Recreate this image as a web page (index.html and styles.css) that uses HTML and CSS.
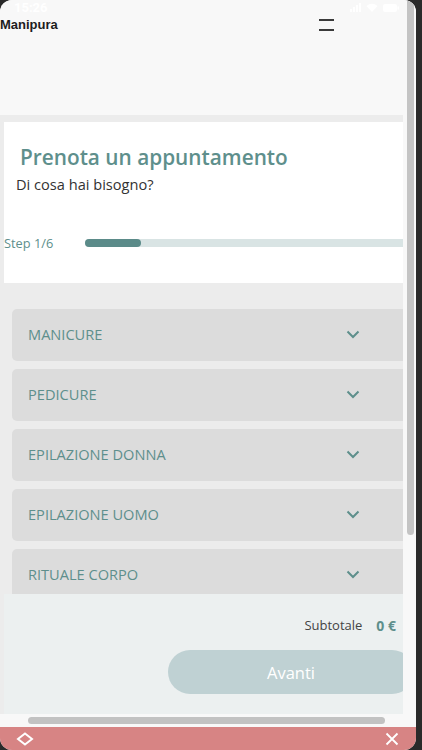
FILE: index.html
```html
<!DOCTYPE html>
<html lang="it">
<head>
  <meta charset="UTF-8">
  <meta name="viewport" content="width=device-width, initial-scale=1.0">
  <title>Manipura - Prenota un appuntamento</title>
  <link rel="stylesheet" href="styles.css">
</head>
<body>
  <div class="device">
    <div class="screen">
      <div class="viewport">
        <div class="page">
          <div class="statusbar">
            <span class="time">15:26</span>
            <span class="status-icons">
              <svg width="11" height="9" viewBox="0 0 11 9"><rect x="0" y="6" width="2" height="3" fill="#fff"/><rect x="3" y="4" width="2" height="5" fill="#fff"/><rect x="6" y="2" width="2" height="7" fill="#fff"/><rect x="9" y="0" width="2" height="9" fill="#fff"/></svg>
              <svg width="12" height="9" viewBox="0 0 12 9"><path d="M6 9 0.5 3a8 8 0 0 1 11 0z" fill="#fff"/></svg>
              <svg width="16" height="8" viewBox="0 0 16 8"><rect x="0" y="0" width="14" height="8" rx="2" fill="#fff"/><rect x="14.5" y="2.5" width="1.5" height="3" fill="#fff"/></svg>
            </span>
          </div>

          <header class="topbar">
            <span class="brand">Manipura</span>
            <button class="menu" aria-label="Menu"><span></span><span></span></button>
          </header>

          <main class="booking">
            <section class="intro">
              <h1>Prenota un appuntamento</h1>
              <p class="question">Di cosa hai bisogno?</p>
              <div class="step">
                <span class="step-label">Step 1/6</span>
                <div class="progress"><div class="progress-fill" style="width: 56px"></div></div>
              </div>
            </section>

            <div class="services">
              <div class="service"><span>Manicure</span><svg class="chevron" width="14" height="9" viewBox="0 0 14 9"><path d="M1.5 1.5 7 7l5.5-5.5"/></svg></div>
              <div class="service"><span>Pedicure</span><svg class="chevron" width="14" height="9" viewBox="0 0 14 9"><path d="M1.5 1.5 7 7l5.5-5.5"/></svg></div>
              <div class="service"><span>Epilazione donna</span><svg class="chevron" width="14" height="9" viewBox="0 0 14 9"><path d="M1.5 1.5 7 7l5.5-5.5"/></svg></div>
              <div class="service"><span>Epilazione uomo</span><svg class="chevron" width="14" height="9" viewBox="0 0 14 9"><path d="M1.5 1.5 7 7l5.5-5.5"/></svg></div>
              <div class="service"><span>Rituale corpo</span><svg class="chevron" width="14" height="9" viewBox="0 0 14 9"><path d="M1.5 1.5 7 7l5.5-5.5"/></svg></div>
            </div>

            <footer class="summary">
              <div class="subtotal">
                <span class="subtotal-label">Subtotale</span>
                <strong class="subtotal-value">0 €</strong>
              </div>
              <button class="next" disabled>Avanti</button>
            </footer>
          </main>
        </div>
        <div class="vscroll"><span class="vthumb"></span></div>
      </div>

      <div class="hscroll"><span class="hthumb"></span></div>

      <nav class="toolbar">
        <svg width="18" height="14" viewBox="0 0 18 14"><path d="M9 1.5 16 7l-7 5.5L2 7z" fill="none" stroke="#fff" stroke-width="2" stroke-linejoin="miter"/></svg>
        <svg width="14" height="14" viewBox="0 0 14 14"><path d="M1.5 1.5l11 11M12.5 1.5l-11 11" stroke="#fff" stroke-width="1.8"/></svg>
      </nav>
    </div>
  </div>
</body>
</html>
```

FILE: styles.css
```css
* {
  box-sizing: border-box;
}

body {
  margin: 0;
  padding: 0;
  width: 422px;
  height: 750px;
  overflow: hidden;
  background: #2a2a2a;
  font-family: "Open Sans", Arial, sans-serif;
}

.device {
  width: 422px;
  height: 750px;
  background: #2a2a2a;
}

.screen {
  width: 416px;
  height: 750px;
  background: #f8f8f8;
  border-radius: 12px;
  overflow: hidden;
  display: flex;
  flex-direction: column;
}

.viewport {
  height: 714px;
  display: flex;
}

.page {
  width: 407px;
  padding-right: 4px;
  background: #f8f8f8;
}

.vscroll {
  width: 9px;
  padding-right: 2px;
  background: #f8f8f8;
}

.vthumb {
  display: block;
  width: 7px;
  height: 535px;
  background: #c4c4c4;
  border-radius: 0 0 4px 4px;
}

/* status bar + header */
.statusbar {
  height: 15px;
  display: flex;
  align-items: center;
  justify-content: space-between;
  padding: 0 4px 0 14px;
}

.time {
  color: #fff;
  font-family: Roboto, Arial, sans-serif;
  font-weight: 700;
  font-size: 13px;
}

.status-icons {
  display: flex;
  align-items: center;
  gap: 5px;
}

.topbar {
  height: 100px;
  display: flex;
  justify-content: space-between;
  align-items: flex-start;
  padding-right: 69px;
}

.brand {
  font-family: "Liberation Sans", Arial, sans-serif;
  font-weight: 700;
  font-size: 13px;
  line-height: 20px;
  color: #1d1d1d;
}

.menu {
  display: flex;
  flex-direction: column;
  gap: 7.5px;
  width: 15px;
  padding: 0;
  margin-top: 4px;
  border: none;
  background: none;
}

.menu span {
  display: block;
  width: 15px;
  height: 2px;
  background: #3a3a3a;
}

/* booking */
.booking {
  width: 403px;
  height: 599px;
  overflow: hidden;
  background: #ececec;
  padding: 7px 0 0 4px;
}

.intro {
  height: 161px;
  background: #fff;
  padding-top: 21px;
}

.intro h1 {
  margin: 0;
  padding-left: 16px;
  font-size: 20.8px;
  font-weight: 600;
  line-height: 28px;
  color: #5e8f8c;
}

.question {
  margin: 3px 0 0;
  padding-left: 12px;
  font-size: 14.6px;
  line-height: 20px;
  color: #333;
}

.step {
  display: flex;
  align-items: center;
  margin-top: 40px;
  height: 18px;
}

.step-label {
  width: 81px;
  font-size: 12.8px;
  color: #5e8f8c;
}

.progress {
  flex: 1;
  height: 8.5px;
  background: #d9e4e4;
  border-radius: 5px 0 0 5px;
}

.progress-fill {
  height: 100%;
  background: #5b8b89;
  border-radius: 5px;
}

.services {
  height: 311px;
  overflow: hidden;
  padding: 26px 0 0 8px;
  display: flex;
  flex-direction: column;
  gap: 8px;
}

.service {
  flex: none;
  width: 400px;
  height: 52px;
  display: flex;
  align-items: center;
  justify-content: space-between;
  padding: 0 52px 2px 16px;
  background: #dcdcdc;
  border-radius: 5px;
  font-size: 14.6px;
  text-transform: uppercase;
  color: #5e8f8c;
}

.chevron path {
  fill: none;
  stroke: #5e8f8c;
  stroke-width: 2;
}

.summary {
  height: 120px;
  background: #ecf0f0;
  padding-top: 21px;
}

.subtotal {
  display: flex;
  justify-content: flex-end;
  align-items: center;
  gap: 14px;
  padding-right: 7px;
  height: 20px;
}

.subtotal-label {
  font-size: 13px;
  color: #444;
}

.subtotal-value {
  font-size: 14px;
  font-weight: 700;
  color: #5e8f8c;
}

.next {
  display: block;
  margin: 15px 0 0 164px;
  width: 246px;
  height: 44px;
  border: none;
  border-radius: 22px;
  background: #bfd1d3;
  color: #fff;
  font-family: "Open Sans", Arial, sans-serif;
  font-size: 16.5px;
}

/* browser chrome */
.hscroll {
  height: 13px;
  padding: 3px 0 0 28px;
  background: #f8f8f8;
}

.hthumb {
  display: block;
  width: 357px;
  height: 7px;
  background: #c2c2c2;
  border-radius: 4px;
}

.toolbar {
  flex: 1;
  display: flex;
  align-items: center;
  justify-content: space-between;
  padding: 0 17px 0 16px;
  background: #d78484;
}
```
